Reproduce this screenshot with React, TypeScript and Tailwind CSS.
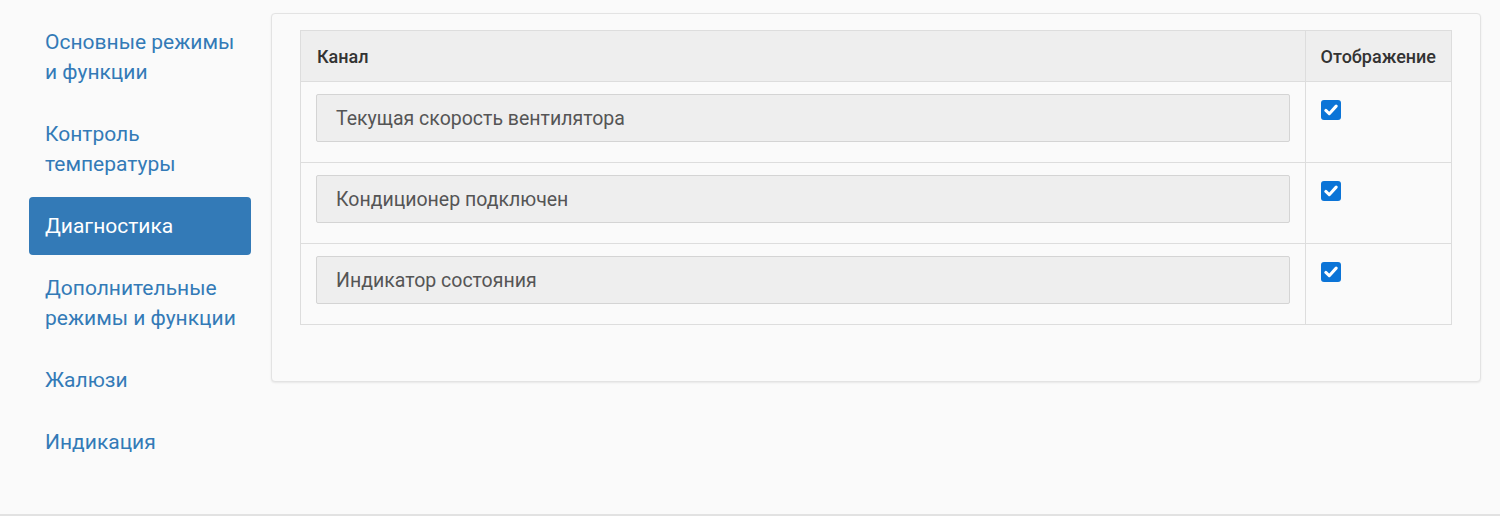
import React from 'react';

const navItems = [
  { label: 'Основные режимы\nи функции', active: false },
  { label: 'Контроль\nтемпературы', active: false },
  { label: 'Диагностика', active: true },
  { label: 'Дополнительные\nрежимы и функции', active: false },
  { label: 'Жалюзи', active: false },
  { label: 'Индикация', active: false },
];

const channels = [
  'Текущая скорость вентилятора',
  'Кондиционер подключен',
  'Индикатор состояния',
];

const Checkbox: React.FC = () => (
  <span className="flex h-[20px] w-[20px] items-center justify-center rounded-[3px] bg-[#0b74d7]">
    <svg width="14" height="12" viewBox="0 0 13 11" fill="none">
      <path d="M1.7 5.9 L4.9 9 L11.3 1.9" stroke="white" strokeWidth="2.8" strokeLinecap="round" strokeLinejoin="round" />
    </svg>
  </span>
);

const App: React.FC = () => {
  return (
    <div
      className="flex h-[516px] w-full border-b-2 border-[#e2e2e2] bg-[#fafafa]"
      style={{ fontFamily: 'Roboto, "Noto Sans", sans-serif' }}
    >
      {/* sidebar */}
      <nav className="ml-[29px] mt-[13px] flex w-[222px] flex-col gap-[4px]">
        {navItems.map((item) => (
          <a
            key={item.label}
            href="#"
            className={
              'whitespace-pre rounded-[4px] px-[16px] py-[14px] text-[21px] leading-[30px] ' +
              (item.active ? 'bg-[#337ab7] text-white' : 'text-[#337ab7]')
            }
          >
            {item.label}
          </a>
        ))}
      </nav>

      {/* content */}
      <div className="ml-[20px] mr-[19px] mt-[13px] flex-1 self-start">
        <div className="rounded-[4px] border border-[#e3e3e3] bg-[#fafafa] px-[28px] pb-[56px] pt-[16px] shadow-[0_1px_2px_rgba(0,0,0,0.08)]">
          <table className="w-full border-collapse border border-[#dddddd] text-[#333]">
            <thead>
              <tr className="bg-[#eeeeee]">
                <th className="h-[51px] border border-[#dddddd] px-[16px] text-left text-[18px] font-medium">
                  Канал
                </th>
                <th className="h-[51px] w-[146px] border border-[#dddddd] px-[15px] text-left text-[18px] font-medium">
                  Отображение
                </th>
              </tr>
            </thead>
            <tbody>
              {channels.map((c) => (
                <tr key={c}>
                  <td className="h-[81px] border border-[#dddddd] px-[15px] pb-[19px] pt-[12px] align-top">
                    <div className="flex h-[48px] items-center rounded-[2px] border border-[#d4d4d4] bg-[#eeeeee] px-[19px] pt-[2px] text-[19.5px] text-[#555]">
                      {c}
                    </div>
                  </td>
                  <td className="border border-[#dddddd] px-[15px] pt-[18px] align-top">
                    <Checkbox />
                  </td>
                </tr>
              ))}
            </tbody>
          </table>
        </div>
      </div>
    </div>
  );
};

export default App;
